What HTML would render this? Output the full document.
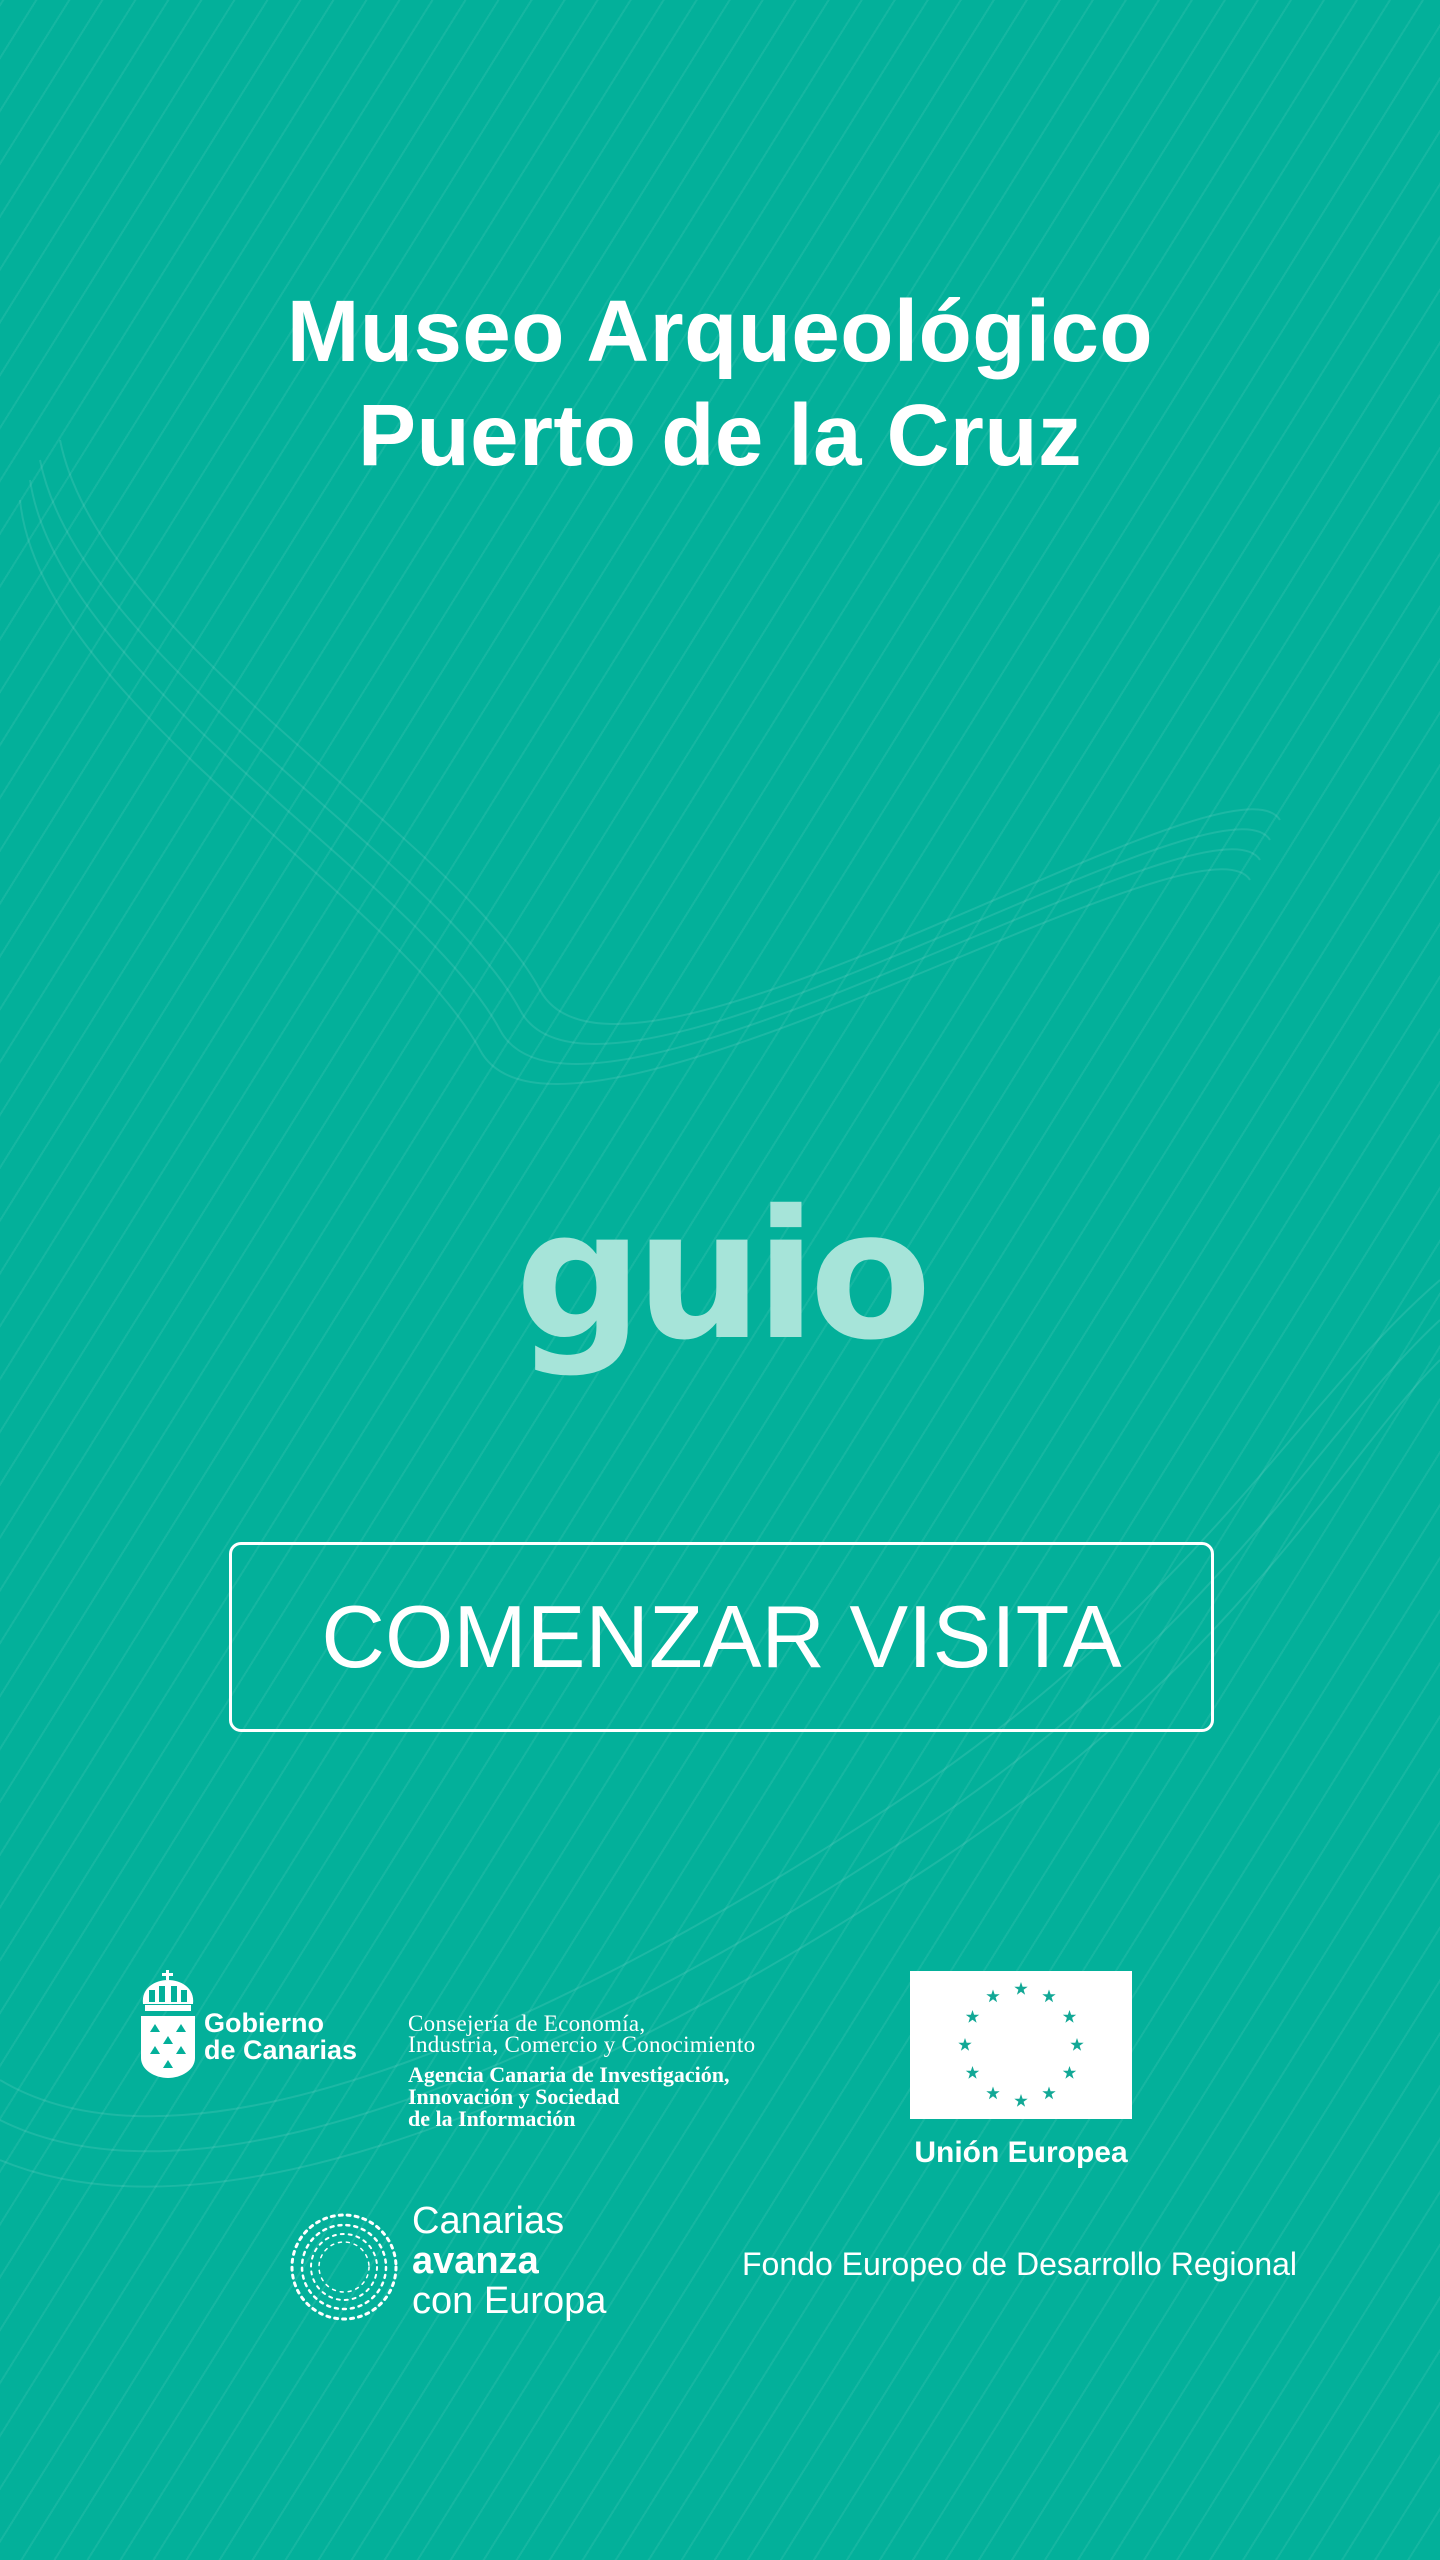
<!DOCTYPE html>
<html><head><meta charset="utf-8">
<style>
html,body{margin:0;padding:0}
body{width:1440px;height:2560px;background:#03b09a;position:relative;overflow:hidden;font-family:"Liberation Sans",sans-serif;color:#fff}
.abs{position:absolute}
.pat{position:absolute;left:0;top:0;width:1440px;height:2560px;background:repeating-linear-gradient(-58deg,rgba(255,255,255,0) 0 26px,rgba(255,255,255,0.07) 26px 28px)}
h1{position:absolute;left:0;width:1440px;top:280px;margin:0;text-align:center;font-size:87px;font-weight:bold;line-height:104px;letter-spacing:0.5px}
.guio{position:absolute;left:0;width:1440px;top:1172px;text-align:center;font-family:"DejaVu Sans",sans-serif;font-weight:bold;font-size:178px;letter-spacing:-7px;color:#a6e4d9}
.btn{position:absolute;left:229px;top:1542px;width:979px;height:184px;border:3px solid #fff;border-radius:12px;text-align:center;line-height:184px;font-size:88px}
</style></head><body>
<div class="pat"></div>
<svg class="abs" style="left:0;top:0" width="1440" height="2560">
<g fill="none" stroke="rgba(255,255,255,0.10)" stroke-width="2">
<path d="M20 500 C40 700 400 900 480 1050 S1200 800 1250 880"/>
<path d="M30 480 C60 680 420 880 500 1030 S1210 780 1260 860"/>
<path d="M40 460 C80 660 440 860 520 1010 S1220 760 1270 840"/>
<path d="M60 440 C100 640 460 840 540 990 S1230 740 1280 820"/>
<path d="M0 2080 C200 2200 600 2000 900 1800 S1300 1400 1440 1280"/>
<path d="M0 2120 C220 2230 620 2030 920 1830 S1320 1430 1440 1320"/>
<path d="M0 2160 C240 2260 640 2060 940 1860 S1340 1460 1440 1360"/>
</g></svg>
<h1>Museo Arqueológico<br>Puerto de la Cruz</h1>
<div class="guio">guio</div>
<div class="btn">COMENZAR VISITA</div>

<!-- crest -->
<svg class="abs" style="left:137px;top:1970px" width="62" height="110" viewBox="0 0 62 110">
<g fill="#fff">
<rect x="29" y="0" width="3" height="10"/><rect x="25" y="3" width="11" height="3"/>
<path d="M6 34 C4 18 18 10 31 10 C44 10 58 18 56 34 Z"/>
<rect x="8" y="35" width="46" height="6"/>
<path d="M4 46 H58 V88 C58 100 44 108 31 108 C18 108 4 100 4 88 Z"/>
</g>
<g fill="#03b09a">
<path d="M12 20 h6 v12 h-6z M22 16 h6 v16 h-6z M34 16 h6 v16 h-6z M44 20 h6 v12 h-6z"/>
<path d="M13 62 l5 -8 5 8z M39 62 l5 -8 5 8z M26 74 l5 -8 5 8z M13 84 l5 -8 5 8z M39 84 l5 -8 5 8z M26 98 l5 -8 5 8z"/>
</g></svg>
<div class="abs" style="left:204px;top:2010px;font-size:27px;font-weight:bold;line-height:27px">Gobierno<br>de Canarias</div>
<div class="abs" style="left:408px;top:2013px;font-family:'Liberation Serif',serif;font-size:23px;line-height:21px;letter-spacing:0.3px">Consejería de Economía,<br>Industria, Comercio y Conocimiento</div>
<div class="abs" style="left:408px;top:2064px;font-family:'Liberation Serif',serif;font-size:22px;line-height:22px;font-weight:bold">Agencia Canaria de Investigación,<br>Innovación y Sociedad<br>de la Información</div>

<!-- EU flag -->
<svg class="abs" style="left:910px;top:1971px" width="222" height="148" viewBox="0 0 222 148">
<rect width="222" height="148" fill="#fff"/>
<g fill="#12a896">
<path transform="translate(111,18)" d="M0-7 1.6-2.2 6.7-2.2 2.6 0.8 4.1 5.7 0 2.7 -4.1 5.7 -2.6 0.8 -6.7-2.2 -1.6-2.2Z"/>
<path transform="translate(139,25.5)" d="M0-7 1.6-2.2 6.7-2.2 2.6 0.8 4.1 5.7 0 2.7 -4.1 5.7 -2.6 0.8 -6.7-2.2 -1.6-2.2Z"/>
<path transform="translate(159.5,46)" d="M0-7 1.6-2.2 6.7-2.2 2.6 0.8 4.1 5.7 0 2.7 -4.1 5.7 -2.6 0.8 -6.7-2.2 -1.6-2.2Z"/>
<path transform="translate(167,74)" d="M0-7 1.6-2.2 6.7-2.2 2.6 0.8 4.1 5.7 0 2.7 -4.1 5.7 -2.6 0.8 -6.7-2.2 -1.6-2.2Z"/>
<path transform="translate(159.5,102)" d="M0-7 1.6-2.2 6.7-2.2 2.6 0.8 4.1 5.7 0 2.7 -4.1 5.7 -2.6 0.8 -6.7-2.2 -1.6-2.2Z"/>
<path transform="translate(139,122.5)" d="M0-7 1.6-2.2 6.7-2.2 2.6 0.8 4.1 5.7 0 2.7 -4.1 5.7 -2.6 0.8 -6.7-2.2 -1.6-2.2Z"/>
<path transform="translate(111,130)" d="M0-7 1.6-2.2 6.7-2.2 2.6 0.8 4.1 5.7 0 2.7 -4.1 5.7 -2.6 0.8 -6.7-2.2 -1.6-2.2Z"/>
<path transform="translate(83,122.5)" d="M0-7 1.6-2.2 6.7-2.2 2.6 0.8 4.1 5.7 0 2.7 -4.1 5.7 -2.6 0.8 -6.7-2.2 -1.6-2.2Z"/>
<path transform="translate(62.5,102)" d="M0-7 1.6-2.2 6.7-2.2 2.6 0.8 4.1 5.7 0 2.7 -4.1 5.7 -2.6 0.8 -6.7-2.2 -1.6-2.2Z"/>
<path transform="translate(55,74)" d="M0-7 1.6-2.2 6.7-2.2 2.6 0.8 4.1 5.7 0 2.7 -4.1 5.7 -2.6 0.8 -6.7-2.2 -1.6-2.2Z"/>
<path transform="translate(62.5,46)" d="M0-7 1.6-2.2 6.7-2.2 2.6 0.8 4.1 5.7 0 2.7 -4.1 5.7 -2.6 0.8 -6.7-2.2 -1.6-2.2Z"/>
<path transform="translate(83,25.5)" d="M0-7 1.6-2.2 6.7-2.2 2.6 0.8 4.1 5.7 0 2.7 -4.1 5.7 -2.6 0.8 -6.7-2.2 -1.6-2.2Z"/>
</g></svg>
<div class="abs" style="left:900px;width:242px;top:2135px;text-align:center;font-size:30px;font-weight:bold;line-height:36px">Unión Europea</div>

<!-- canarias avanza -->
<svg class="abs" style="left:284px;top:2207px" width="120" height="120" viewBox="-60 -60 120 120">
<g stroke="#fff" stroke-linecap="round">
<g stroke-width="3" stroke-dasharray="3 5" fill="none">
<circle r="52"/><circle r="42" stroke-width="2.5"/><circle r="33" stroke-width="2"/><circle r="25" stroke-width="1.5"/>
</g></g></svg>
<div class="abs" style="left:412px;top:2201px;font-size:38px;line-height:40px">Canarias<br><b>avanza</b><br>con Europa</div>
<div class="abs" style="left:742px;top:2246px;font-size:32px;line-height:36px">Fondo Europeo de Desarrollo Regional</div>
</body></html>
